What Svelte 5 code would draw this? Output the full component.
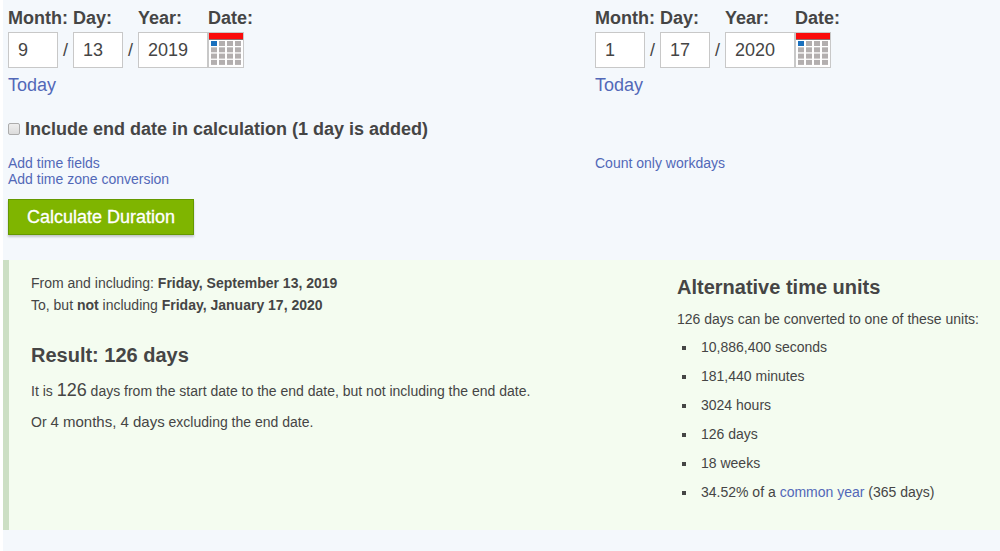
<script lang="ts">
  const dates = $state([
    { id: 'start', name: 'Start date', month: '9', day: '13', year: '2019' },
    { id: 'end', name: 'End date', month: '1', day: '17', year: '2020' },
  ]);

  let includeEnd = $state(false);

  const units = ['10,886,400 seconds', '181,440 minutes', '3024 hours', '126 days', '18 weeks'];

  const cells = Array.from({ length: 16 }, (_, i) => ({
    x: 2 + (i % 4) * 8,
    y: 8 + Math.floor(i / 4) * 6.3,
    active: i === 0,
  }));

  function setToday(date: (typeof dates)[number]) {
    const now = new Date();
    date.month = String(now.getMonth() + 1);
    date.day = String(now.getDate());
    date.year = String(now.getFullYear());
  }
</script>

<main class="page">
  <form class="calculator" onsubmit={(e) => e.preventDefault()}>
    <div class="columns">
      {#each dates as date (date.id)}
        <div class="date" role="group" aria-label={date.name}>
          <div class="fields">
            <div class="field">
              <label for="{date.id}-month">Month:</label>
              <input id="{date.id}-month" type="text" bind:value={date.month} />
            </div>
            <span class="slash">/</span>
            <div class="field">
              <label for="{date.id}-day">Day:</label>
              <input id="{date.id}-day" type="text" bind:value={date.day} />
            </div>
            <span class="slash">/</span>
            <div class="field year">
              <label for="{date.id}-year">Year:</label>
              <input id="{date.id}-year" type="text" bind:value={date.year} />
            </div>
            <div class="field">
              <label for="{date.id}-picker">Date:</label>
              <button class="picker" id="{date.id}-picker" type="button">
                <svg viewBox="0 0 34 34" aria-hidden="true">
                  <rect width="34" height="6" fill="#fb0b0b" />
                  <rect y="6" width="34" height="1" fill="#8d6b6b" />
                  {#each cells as cell}
                    <rect
                      x={cell.x}
                      y={cell.y}
                      width="6"
                      height="5"
                      fill={cell.active ? '#1a70bd' : '#b3afaf'}
                    />
                  {/each}
                </svg>
              </button>
            </div>
          </div>
          <a class="today" href="#today" onclick={() => setToday(date)}>Today</a>
        </div>
      {/each}
    </div>

    <div class="include">
      <input id="include-end" type="checkbox" bind:checked={includeEnd} />
      <label for="include-end">Include end date in calculation (1 day is added)</label>
    </div>

    <div class="columns options">
      <div class="links">
        <a href="#time">Add time fields</a>
        <a href="#zone">Add time zone conversion</a>
      </div>
      <div class="links">
        <a href="#workdays">Count only workdays</a>
      </div>
    </div>

    <button class="submit" type="submit">Calculate Duration</button>
  </form>

  <section class="result">
    <div>
      <p class="range">
        From and including: <strong>Friday, September 13, 2019</strong><br />
        To, but <strong>not</strong> including <strong>Friday, January 17, 2020</strong>
      </p>
      <h2>Result: 126 days</h2>
      <p>
        It is <span class="big">126</span> days from the start date to the end date, but not
        including the end date.
      </p>
      <p>Or <span class="medium">4 months, 4 days</span> excluding the end date.</p>
    </div>
    <div class="alternatives">
      <h2>Alternative time units</h2>
      <p>126 days can be converted to one of these units:</p>
      <ul>
        {#each units as unit}
          <li>{unit}</li>
        {/each}
        <li>34.52% of a <a href="#common-year">common year</a> (365 days)</li>
      </ul>
    </div>
  </section>
</main>

<style>
  :global(body) {
    margin: 0;
    background: #f4f8fc;
  }

  .page {
    box-sizing: border-box;
    min-height: 100vh;
    border-left: 3px solid #fff;
    color: #454545;
    font-family: 'Liberation Sans', Arial, sans-serif;
    font-size: 14px;
    line-height: 22px;
  }

  a {
    color: #5268b8;
    text-decoration: none;
  }

  a:hover {
    text-decoration: underline;
  }

  .calculator {
    padding: 8px 0 25px 5px;
  }

  .columns {
    display: grid;
    grid-template-columns: 587fr 405fr;
  }

  .fields {
    display: flex;
    align-items: flex-end;
  }

  .field {
    display: flex;
    flex-direction: column;
    gap: 4px;
    width: 50px;
  }

  .field.year {
    width: 70px;
  }

  label {
    font-size: 18px;
    font-weight: bold;
    line-height: 20px;
    white-space: nowrap;
  }

  .field input {
    box-sizing: border-box;
    width: 100%;
    height: 36px;
    padding: 0 9px;
    border: 1px solid #c8c8c8;
    border-radius: 0;
    background: #fff;
    color: #454545;
    font-family: inherit;
    font-size: 18px;
  }

  .slash {
    width: 15px;
    font-size: 18px;
    line-height: 36px;
    text-align: center;
  }

  .picker {
    box-sizing: border-box;
    width: 36px;
    height: 36px;
    padding: 0;
    border: 1px solid #c8c8c8;
    background: #fff;
    cursor: pointer;
  }

  .picker svg {
    display: block;
  }

  .today {
    display: inline-block;
    margin-top: 6px;
    font-size: 18px;
  }

  .include {
    display: flex;
    align-items: center;
    gap: 5px;
    margin-top: 22px;
  }

  .include input {
    appearance: none;
    width: 12px;
    height: 12px;
    margin: 0;
    border: 1px solid #acacac;
    border-radius: 2px;
    background: linear-gradient(#eee, #dcdcdc);
  }

  .include input:checked {
    background: #5268b8;
  }

  .options {
    margin-top: 16px;
  }

  .links {
    display: flex;
    flex-direction: column;
    align-items: flex-start;
    line-height: 16px;
  }

  .submit {
    display: block;
    height: 36px;
    margin-top: 12px;
    padding: 0 18px;
    border: 1px solid #659900;
    background: #7fb500;
    box-shadow: 0 2px 2px rgb(0 0 0 / 0.2);
    color: #fff;
    font-family: inherit;
    font-size: 18px;
    -webkit-text-stroke: 0.3px #fff;
    cursor: pointer;
  }

  .result {
    display: grid;
    grid-template-columns: 2fr 1fr;
    padding: 12px 0 20px 22px;
    border-left: 6px solid #ccdfc4;
    background: #f4fcf0;
  }

  h2 {
    margin: 0;
    font-size: 20px;
    line-height: 26px;
  }

  h2 + p {
    margin-top: 11px;
  }

  p {
    margin: 9px 0;
  }

  .range {
    margin: 0 0 26px;
  }

  .big {
    font-size: 18px;
  }

  .medium {
    font-size: 15px;
  }

  .alternatives p {
    margin: 8px 0 6px;
  }

  .alternatives h2 {
    margin-top: 2px;
  }

  ul {
    margin: 0;
    padding-left: 5px;
    list-style: none;
  }

  li {
    padding-bottom: 7px;
  }

  li::before {
    content: '';
    display: inline-block;
    width: 4px;
    height: 4px;
    margin-right: 15px;
    background: currentColor;
    vertical-align: 2px;
  }
</style>
